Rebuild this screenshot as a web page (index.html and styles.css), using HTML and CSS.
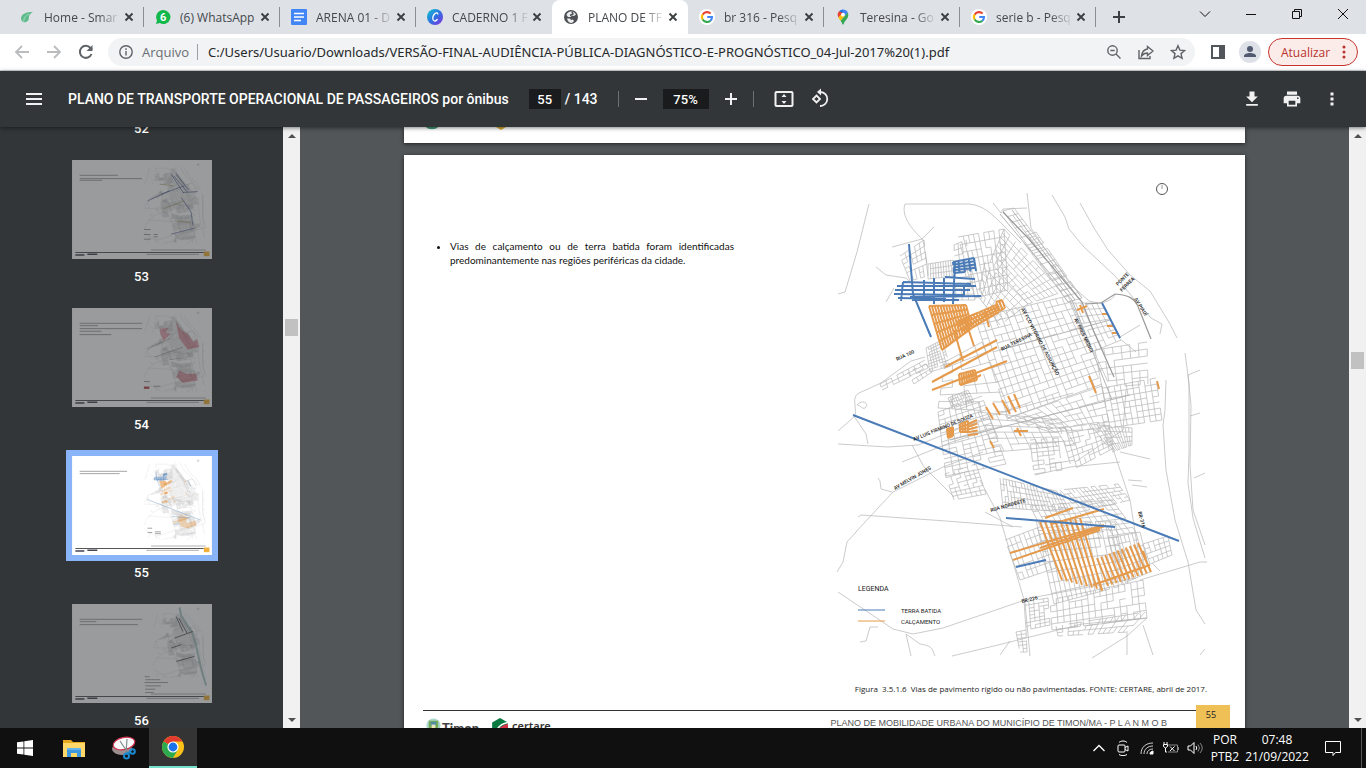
FILE: index.html
```html
<!DOCTYPE html>
<html lang="pt-BR">
<head>
    <meta charset="UTF-8">
    <meta name="viewport" content="width=device-width, initial-scale=1.0">
    <title>PLANO DE TRANSPORTE OPERACIONAL DE PASSAGEIROS por ônibus</title>
    <link rel="stylesheet" href="styles.css">
</head>
<body>

    <!-- shared shapes -->
    <svg class="defs" aria-hidden="true">
        <defs>
            <symbol id="google" viewBox="0 0 16 16">
                <circle cx="8" cy="8" r="8" fill="#fff"/>
                <g fill="none" stroke-width="2.1">
                    <path d="M11.6 4.6A5 5 0 0 0 3.7 5.6" stroke="#ea4335"/>
                    <path d="M3.7 5.4a5 5 0 0 0 0 5.2" stroke="#fbbc05"/>
                    <path d="M3.7 10.4a5 5 0 0 0 7.7 1.3" stroke="#34a853"/>
                    <path d="M11.3 11.8A5 5 0 0 0 13 8H8.2" stroke="#4285f4"/>
                </g>
            </symbol>
            <symbol id="close" viewBox="0 0 16 16">
                <path d="M4.5 4.5l7 7M11.5 4.5l-7 7" stroke="#3c4043" stroke-width="1.9"/>
            </symbol>
            <symbol id="slide-foot" viewBox="0 0 841 595">
                <path d="M20 556h772" stroke="#333" stroke-width="5"/>
                <path d="M20 571h54M92 567h60" stroke="#445" stroke-width="9"/>
                <path d="M447 567h316" stroke="#888" stroke-width="4"/>
                <path d="M475 541h328" stroke="#666" stroke-width="3"/>
                <path d="M792 550h34v28h-34z" fill="#f0b23c"/>
                <circle cx="758" cy="28" r="5" fill="none" stroke="#888" stroke-width="2"/>
            </symbol>
        </defs>
    </svg>

    <header class="tab-bar">
        <nav class="tabs">
            <div class="tab">
                <svg class="favicon" viewBox="0 0 16 16"><path d="M14 3C8 3 3 4 2 9c0 4 3 5 5 4 3-1 3-4 3-6 1-2 2-3 4-4z" fill="#5dbb8c"/><path d="M5 14c-1-4 1-7 5-9" fill="none" stroke="#a7dcc2"/></svg>
                <a class="tab-title" href="#">Home - Smar</a>
                <button class="tab-close" aria-label="Fechar"><svg><use href="#close"/></svg></button>
            </div>
            <div class="tab">
                <svg class="favicon" viewBox="0 0 16 16"><path d="M8.200 1a7 7 0 1 1-3.400 13L1 15l1-3.600A7 7 0 0 1 8.200 1z" fill="#12b84a"/><text x="8.200" y="12" text-anchor="middle" class="badge">6</text></svg>
                <a class="tab-title" href="#">(6) WhatsApp</a>
                <button class="tab-close" aria-label="Fechar"><svg><use href="#close"/></svg></button>
            </div>
            <div class="tab">
                <svg class="favicon" viewBox="0 0 16 16"><rect width="16" height="16" rx="1" fill="#4285f4"/><path d="M3 4.500h10M3 8h10M3 11.500h7" stroke="#fff" stroke-width="1.700"/></svg>
                <a class="tab-title" href="#">ARENA 01 - D</a>
                <button class="tab-close" aria-label="Fechar"><svg><use href="#close"/></svg></button>
            </div>
            <div class="tab before-active">
                <svg class="favicon" viewBox="0 0 16 16"><defs><linearGradient id="canva" x1="0" y1="0" x2="1" y2="1"><stop offset="0" stop-color="#10c8d2"/><stop offset=".5" stop-color="#2d72df"/><stop offset="1" stop-color="#8a2be2"/></linearGradient></defs><circle cx="8" cy="8" r="8" fill="url(#canva)"/><path d="M10.700 5.500c.5-2-1.600-2.300-3.200-.5C5.700 7 5.200 10 6.500 11.400c1.200 1.200 3 .4 4-1.200" fill="none" stroke="#fff" stroke-width="1.300"/></svg>
                <a class="tab-title" href="#">CADERNO 1 F</a>
                <button class="tab-close" aria-label="Fechar"><svg><use href="#close"/></svg></button>
            </div>
            <div class="tab active">
                <svg class="favicon" viewBox="0 0 16 16"><circle cx="8" cy="8" r="7" fill="#4d5156"/><path d="M8 2.500c2 0 4 1 5 3l-2 1.500-2-.5L7.500 8H5L3.500 6C4 4 6 2.500 8 2.500z" fill="#fff" opacity=".9"/><path d="M4 9.500h3l1 1.500 2-.5 1 1.500-2 2c-3 0-4.500-2-5-4.500z" fill="#fff" opacity=".9"/><path d="M9 3l1 2-3 1.500" fill="none" stroke="#4d5156" stroke-width="1.500"/></svg>
                <a class="tab-title" href="#">PLANO DE TF</a>
                <button class="tab-close" aria-label="Fechar"><svg><use href="#close"/></svg></button>
            </div>
            <div class="tab">
                <svg class="favicon"><use href="#google"/></svg>
                <a class="tab-title" href="#">br 316 - Pesq</a>
                <button class="tab-close" aria-label="Fechar"><svg><use href="#close"/></svg></button>
            </div>
            <div class="tab">
                <svg class="favicon" viewBox="0 0 16 16"><path d="M8 .5a5.300 5.300 0 0 0-4 1.800L8 6z" fill="#1a73e8"/><path d="M4 2.300A5.500 5.500 0 0 0 3.500 8.600L8 4z" fill="#ea4335"/><path d="M3.400 8.500c.6 1.200 1.500 2.200 2.200 3.300L11.500 5 8 3.600z" fill="#fbbc04"/><path d="M12.800 3.500c1.100 2.500.4 4.500-1 6.400C10 12 9 13.500 8.600 15.300c-.2.500-1 .5-1.200 0-.4-1.500-1-2.500-1.800-3.500z" fill="#34a853"/><path d="M8 .5c2.200 0 4 1.200 4.800 3L9.500 7.300 8 4z" fill="#4285f4"/><circle cx="8" cy="5.700" r="1.900" fill="#fff"/></svg>
                <a class="tab-title" href="#">Teresina - Go</a>
                <button class="tab-close" aria-label="Fechar"><svg><use href="#close"/></svg></button>
            </div>
            <div class="tab">
                <svg class="favicon"><use href="#google"/></svg>
                <a class="tab-title" href="#">serie b - Pesq</a>
                <button class="tab-close" aria-label="Fechar"><svg><use href="#close"/></svg></button>
            </div>
            <button class="new-tab" aria-label="Nova guia"><svg viewBox="0 0 16 16"><path d="M8 2v12M2 8h12" stroke="#3c4043" stroke-width="2"/></svg></button>
        </nav>
        <div class="window-buttons">
            <button aria-label="Pesquisar guias"><svg viewBox="0 0 12 12"><path d="M1 3.500l5 5 5-5"/></svg></button>
            <button aria-label="Minimizar"><svg viewBox="0 0 12 12"><path d="M1 6.500h10"/></svg></button>
            <button aria-label="Restaurar"><svg viewBox="0 0 12 12"><path d="M1.500 3.500h7v7h-7zM3.500 3.500v-2h7v7h-2"/></svg></button>
            <button aria-label="Fechar"><svg viewBox="0 0 12 12"><path d="M1 1l10 10M11 1L1 11"/></svg></button>
        </div>
    </header>

    <div class="address-bar">
        <button class="nav-button" aria-label="Voltar"><svg viewBox="0 0 16 16"><path d="M15 8H2M8 2L2 8l6 6" stroke="#babcbe"/></svg></button>
        <button class="nav-button" aria-label="Avançar"><svg viewBox="0 0 16 16"><path d="M1 8h13M8 2l6 6-6 6" stroke="#babcbe"/></svg></button>
        <button class="nav-button" aria-label="Recarregar"><svg viewBox="0 0 16 16"><path d="M13.500 10A6 6 0 1 1 12.500 4L14 5.500" stroke="#5f6368" stroke-width="2"/><path d="M14.500 1v6h-6z" fill="#5f6368" stroke="none"/></svg></button>
        <div class="omnibox">
            <svg class="info" viewBox="0 0 16 16"><circle cx="8" cy="8" r="6.200"/><path d="M8 7v4.500M8 4.300V6"/></svg>
            <label for="url">Arquivo</label>
            <input id="url" type="text" value="C:/Users/Usuario/Downloads/VERSÃO-FINAL-AUDIÊNCIA-PÚBLICA-DIAGNÓSTICO-E-PROGNÓSTICO_04-Jul-2017%20(1).pdf">
            <button aria-label="Zoom"><svg viewBox="0 0 16 16"><circle cx="6.500" cy="6.500" r="4.700"/><path d="M10 10l4.500 4.500M4.300 6.500h4.400"/></svg></button>
            <button aria-label="Compartilhar"><svg viewBox="0 0 16 16"><path d="M1 6v8.500h11V12"/><path d="M9.500 2.500L15 7l-5.500 4.500V9C7 9 5 10 3.500 12 4 8 6 5.500 9.500 5z"/></svg></button>
            <button aria-label="Favoritos"><svg viewBox="0 0 16 16"><path d="M8 1.700l1.900 4.400 4.700.4-3.600 3.100 1.100 4.700L8 11.800l-4.100 2.500L5 9.600 1.400 6.500l4.700-.4z"/></svg></button>
        </div>
        <button class="side-panel" aria-label="Painel lateral"><svg viewBox="0 0 16 16"><path d="M2 2h12v12H2z" fill="none" stroke="#53575b" stroke-width="2"/><path d="M9 2h5v12H9z" fill="#53575b"/></svg></button>
        <button class="avatar" aria-label="Perfil"><svg viewBox="0 0 22 22"><circle cx="11" cy="11" r="11" fill="#dfe1e8"/><circle cx="11" cy="8" r="3" fill="#515a70"/><path d="M5 16v-1c0-4 12-4 12 0v1z" fill="#515a70"/></svg></button>
        <button class="update">Atualizar <svg viewBox="0 0 4 16"><circle cx="2" cy="3" r="1.500"/><circle cx="2" cy="8" r="1.500"/><circle cx="2" cy="13" r="1.500"/></svg></button>
    </div>

    <div class="pdf-toolbar">
        <button class="menu" aria-label="Menu"><svg viewBox="0 0 24 24"><path d="M4 7h16M4 12h16M4 17h16" stroke-width="2"/></svg></button>
        <h1>PLANO DE TRANSPORTE OPERACIONAL DE PASSAGEIROS por ônibus</h1>
        <div class="pdf-controls">
            <input class="page-number" type="text" value="55" aria-label="Página">
            <span class="page-total">/ 143</span>
            <span class="divider"></span>
            <button aria-label="Reduzir"><svg viewBox="0 0 24 24"><path d="M6 12h12" stroke-width="2"/></svg></button>
            <input class="zoom-level" type="text" value="75%" aria-label="Zoom">
            <button aria-label="Ampliar"><svg viewBox="0 0 24 24"><path d="M6 12h12M12 6v12" stroke-width="2"/></svg></button>
            <span class="divider"></span>
            <button class="fit" aria-label="Ajustar à página"><svg viewBox="0 0 24 24"><rect x="3.500" y="5" width="17" height="14" rx="1" stroke-width="2"/><path d="M12 7l2.500 3h-5zM12 17l2.500-3h-5z" fill="#f1f1f1" stroke="none"/></svg></button>
            <button aria-label="Girar"><svg viewBox="0 0 24 24"><path d="M8.500 8.500L12 12l-3.500 3.500L5 12z" stroke-width="1.800"/><path d="M11 5h1.500a7 7 0 1 1-.5 14" stroke-width="1.800"/><path d="M13 1.500v7L9 5z" fill="#f1f1f1" stroke="none"/></svg></button>
        </div>
        <div class="pdf-actions">
            <button aria-label="Fazer download"><svg viewBox="0 0 24 24"><path d="M19 9h-4V3H9v6H5l7 7zM5 18v2h14v-2z" fill="#f1f1f1" stroke="none"/></svg></button>
            <button aria-label="Imprimir"><svg viewBox="0 0 24 24"><path d="M19 8H5c-1.700 0-3 1.300-3 3v6h4v4h12v-4h4v-6c0-1.700-1.300-3-3-3zm-3 11H8v-5h8zm3-7a1 1 0 1 1 0-2 1 1 0 0 1 0 2zM18 3H6v4h12z" fill="#f1f1f1" stroke="none"/></svg></button>
            <button aria-label="Mais ações"><svg viewBox="0 0 24 24"><path d="M10.200 4.200h3.600v3.600h-3.600zM10.200 10.200h3.600v3.600h-3.600zM10.200 16.200h3.600v3.600h-3.600z" fill="#f1f1f1" stroke="none"/></svg></button>
        </div>
    </div>

    <main class="viewer">
        <aside class="sidebar">
            <div class="thumbs">
                <span class="thumb-label">52</span>

                <svg class="thumb" viewBox="0 0 841 595">
                    <rect width="841" height="595" fill="#fff"/>
                    <path d="M46 92h230M46 112h375M46 122h135" class="thumb-text"/>
                    <g transform="translate(-404 -155)"><use href="#streets"/>
                        <path d="M1000 240l75 115M1015 250l80 95M1030 240l75 95M940 360l140-50M860 400l130-60M1070 350l90-5M1060 380l60 90 10 80M1000 600l140-35" stroke="#44538a" stroke-width="6" fill="none" opacity=".6"/>
                        <path d="M930 300l80 10M950 450l130-50M1020 520l100 10" stroke="#a78a50" stroke-width="6" opacity=".5"/></g>
                    <path d="M432 418h40M432 448h40M432 476h40M490 448h25M490 462h25" class="thumb-text"/>
                    <use href="#slide-foot"/>
                </svg>
                <span class="thumb-label">53</span>

                <svg class="thumb" viewBox="0 0 841 595">
                    <rect width="841" height="595" fill="#fff"/>
                    <path d="M46 92h375M46 106h110M46 124h375M46 140h130M46 160h190" class="thumb-text"/>
                    <g transform="translate(-404 -155)"><use href="#streets"/>
                        <path d="M1028 240l35 50 40 25 30 45 25-20 10 50-70 15-50-70zM930 280l55-5-20 25 30 10-40 45-20-40zM1050 530l40 20 60 0 10 40-90 15-40-35z" fill="#c22b40" opacity=".4"/>
                        <path d="M860 400l140-65M900 450l170-60M990 465l80-10" stroke="#555" stroke-width="4" opacity=".5"/></g>
                    <path d="M432 442h36M490 470h40" class="thumb-text"/>
                    <path d="M432 472h32v14h-32z" fill="#b8484f"/>
                    <use href="#slide-foot"/>
                </svg>
                <span class="thumb-label">54</span>

                <svg class="thumb current" viewBox="0 0 841 595">
                    <rect width="841" height="595" fill="#fff"/>
                    <path d="M46 92h285M46 106h240" class="thumb-text"/>
                    <g transform="translate(-404 -155)"><use href="#streets"/><use href="#paved"/><use href="#dirt"/></g>
                    <path d="M454 434h28M454 460h28M498 456h36M498 467h36" class="thumb-text"/>
                    <use href="#slide-foot"/>
                </svg>
                <span class="thumb-label">55</span>

                <svg class="thumb" viewBox="0 0 841 595">
                    <rect width="841" height="595" fill="#fff"/>
                    <path d="M46 92h375M46 106h100M46 124h350" class="thumb-text"/>
                    <g transform="translate(-404 -155)"><use href="#streets" transform="translate(180 40) scale(.85)"/>
                        <path d="M1050 175l10 50 65 100 25 80 30 140 30 100" stroke="#8fb3ad" stroke-width="12" fill="none" opacity=".7"/>
                        <path d="M1030 230l40 90M1045 240l50 90M1020 360l110-40M1000 420l60-20M1030 500l110-30" stroke="#333" stroke-width="6" opacity=".7"/></g>
                    <path d="M436 437h30M440 455h90M436 472h140M440 492h94M440 512h60M440 532h50" class="thumb-text"/>
                    <use href="#slide-foot"/>
                </svg>
                <span class="thumb-label">56</span>
            </div>
            <div class="scrollbar side-scroll">
                <span class="arrow up"></span>
                <span class="scroll-thumb"></span>
                <span class="arrow down"></span>
            </div>
        </aside>

        <div class="pages">
            <section class="page previous">
                <svg viewBox="0 0 100 4"><path d="M4 0c2 3 10 3 12 0z" fill="#3c9c76"/><path d="M74 0h10l-5 3z" fill="#d9a92e"/></svg>
            </section>
            <section class="page">
                <div class="page-body">
                    <ul>
                        <li>Vias de calçamento ou de terra batida foram identificadas predominantemente nas regiões periféricas da cidade.</li>
                    </ul>
                    <svg class="map" viewBox="836 180 374 480" role="img" aria-label="Mapa de vias">
                        <g id="streets">
                            <path id="blocks"/>
                            <!-- rivers and outer roads -->
                            <path d="M869 204l-12 48-12 40-7 2M905 204h65c14 2 22 10 33 21l18 18M905 204c-4 12 6 24 18 36l4 24M892 247l30-8 12-12M876 267l10 8 20 3 4 4M886 302l8-14M993 203l8 10 2-4 24-1M1027 193l4 35 10 15 30 42 18 16c14 4 22 0 26-6"/>
                            <path d="M1080 203l14 25 14 22 22 25 20 16 20 33 7 14M1052 195l13 22 4 12 14 17 32 30 20 24 16 18 11 6-2 10"/>
                            <path d="M1166 380l-1 30-2 15 3 45 9 50 13 42 8 48 9 14M1185 353l4 30v70l-1 30 5 35 12 40M1188 375l3 30-1 60 3 45 12 35M1188 375l12-5M1190 416l10-3M1194 478l11-5M1119 338l17 14M1120 337l20-12"/>
                            <path d="M855 415c2-8-4-18 4-22l22-10 30-22 14-4M857 405c5-6 12-2 9 2s-5-2-9-2M838 431l16-14M854 416l12 18 2 10M838 444l50 3 30-2 75-30 80-22M902 462l50-20 50-16M892 492l-11-3-1-8-2-3M893 492l-28 30-18 20-4 20-6 10M893 492l50-25 40-15"/>
                            <path d="M858 517l3-2 85 6 76 6M912 445l12 22 30 30M980 480l20 38 25 85 5 53M985 512l28 15M838 592l55 37 20 5 30-6 88-30 105-20M878 627h-8l-4 14-6 1M906 634l5 22M906 634l14 10c14 2 12 6 15 12M952 656l50-12 80-20 65-6M1000 655l10-14"/>
                            <path d="M1140 580l60-18 7 0M1152 563l8 8M1147 618l-20 18-35 22M1127 633v22M1143 625l10 30M1200 655l5-6M1078 460l45-30 3-40M1110 440l20 60 12 75M1035 475l35-8 50-5M1045 465l30-5M1120 452l30 7M1128 480l14 1M1132 485l15 2"/>
                            <path d="M1000 214l72 86 40 100M1012 210l68 90M1000 350l110-30M950 440l180-45" stroke-width="1"/>
                            <path d="M1085 304l16-1 14-9c12 1 20 3 24 15l12 30M1003 212l25 26 54 64 12 30 20 45" stroke="#999" stroke-width="1.200"/>
                        </g>
                        <g id="paved" fill="none" stroke="#e59a4c" stroke-width="2">
                            <path id="paved-blocks"/>
                            <path d="M945 367l52-27M932 382l65-35M932 390l75-29M961 385l20-10M954 330l9 31M966 322l8 24M985 311l4 16M1010 553l94-28M1013 560l87-30M1045 518l28-10M1052 524l52-15M1040 548l65-22M1093 585l57-20M1098 577l4 14M1014 431h14M1017 428l4 8M1077 310l10-4M1080 305l3 8M1102 314h6M1107 326h6M1112 333h6M1089 376l7 17M1157 381l2 8M986 407l7 12M993 403l7 12M1002 400l8 14M1008 396l8 16M1014 394l6 14M990 441l4 7M1143 551l3 8"/>
                        </g>
                        <g id="dirt" fill="none" stroke="#4a7bb7" stroke-width="2">
                            <path id="dirt-blocks"/>
                            <path d="M853 415l326 126M1006 518l109 9M1016 567l30-7M1102 303l18 35M909 244l4 50 18 43"/>
                            <path d="M903 282l68 2M897 286l79 0M895 290l75 0M894 294l70 1M898 298l48 1M910 297l71-1M912 300l47 0M945 277l30 2M903 282l-2 19M924 280v17M934 278v26M955 262l-2 42M944 278v24M964 285v12"/>
                        </g>
                        <g class="street-names">
                            <text transform="translate(897 361) rotate(-25)">RUA 100</text>
                            <text transform="translate(1002 351) rotate(-27)">RUA TERESINA</text>
                            <text transform="translate(1021 309) rotate(62)">AV FCO VITORINO DE ASSUNÇÃO</text>
                            <text transform="translate(1074 319) rotate(64)">AV PRES MEDICI</text>
                            <text transform="translate(1118 286) rotate(-45)">PONTE</text>
                            <text transform="translate(1122 292) rotate(-45)">FERREA</text>
                            <text transform="translate(1134 299) rotate(58)">AV PIAUÍ</text>
                            <text transform="translate(914 441) rotate(-22)">AV LUIS FIRMINO DE SOUZA</text>
                            <text transform="translate(895 490) rotate(-30)">AV MELVIN JONES</text>
                            <text transform="translate(991 512) rotate(-16)">RUA NORDESTE</text>
                            <text transform="translate(1138 512) rotate(75)">BR-316</text>
                            <text transform="translate(1022 603) rotate(-14)">BR-226</text>
                        </g>
                        <circle cx="1162" cy="189" r="5.500" fill="none" stroke="#555"/>
                        <path d="M1162 185v4" stroke="#999"/>
                        <text class="legend-title" x="858" y="591">LEGENDA</text>
                        <path d="M858 610h27" stroke="#4a7bb7"/>
                        <path d="M858 621h27" stroke="#e59a4c"/>
                        <text class="legend-item" x="901" y="613">TERRA BATIDA</text>
                        <text class="legend-item" x="901" y="624">CALÇAMENTO</text>
                    </svg>
                </div>
                <p class="caption">Figura&nbsp; 3.5.1.6&nbsp; Vias de pavimento rígido ou não pavimentadas. FONTE: CERTARE, abril de 2017.</p>
                <footer class="page-footer">
                    <div class="footer-line">
                        <svg class="crest" viewBox="0 0 16 16"><circle cx="8" cy="8" r="7.500" fill="#a9d8cf"/><path d="M3 3h10v8l-5 4-5-4z" fill="#7aab55"/><path d="M5 4h6v4H5z" fill="#4d90a3"/><path d="M6 7h4v5H6z" fill="#e9e6c0"/></svg>
                        <span class="timon">Timon</span>
                        <svg class="certare-logo" viewBox="0 0 16 16"><path d="M8 0l7 4v8l-7 4-7-4V4z" fill="#0a7a43"/><path d="M15 5v7l-7 4-3-2c0-4 5-8 10-9z" fill="#d8334a"/><path d="M5 12c1-4 5-7 10-8" fill="none" stroke="#fff" stroke-width="1.500"/></svg>
                        <span class="certare">certare</span>
                        <span class="plan-name">PLANO DE MOBILIDADE URBANA DO MUNICÍPIO DE TIMON/MA - P L A N M O B</span>
                    </div>
                    <span class="page-badge">55</span>
                </footer>
            </section>
        </div>
        <div class="scrollbar main-scroll">
            <span class="arrow up"></span>
            <span class="scroll-thumb"></span>
            <span class="arrow down"></span>
        </div>
    </main>

    <footer class="taskbar">
        <button aria-label="Iniciar"><svg viewBox="0 0 16 16"><path d="M0 2.300l6.500-.9v6.200H0zM7.300 1.300L16 0v7.600H7.300zM0 8.400h6.500v6.200L0 13.700zM7.300 8.400H16V16l-8.700-1.300z" fill="#fff"/></svg></button>
        <button aria-label="Explorador de Arquivos"><svg class="big" viewBox="0 0 24 24"><path d="M1 4h8l2 2h12v15H1z" fill="#e8a822"/><path d="M1 7h22v14H1z" fill="#ffd869"/><path d="M5 12h14v9h-4v-4H9v4H5z" fill="#3f97dd"/><path d="M5 12h14v2H5z" fill="#66b5ee"/></svg></button>
        <button aria-label="Ferramenta de Captura"><svg class="big" viewBox="0 0 24 24"><ellipse cx="10" cy="13" rx="10" ry="6" fill="#9c8d8f"/><ellipse cx="12" cy="7.500" rx="11" ry="6" transform="rotate(-12 12 7.500)" fill="#fafafa" stroke="#cf3550" stroke-width="1.200"/><path d="M8 5l8 12M15 3l-1 14" stroke="#7e8b90" stroke-width="1.200"/><g fill="none" stroke="#1b8bd0" stroke-width="2"><circle cx="14.500" cy="20" r="2.500"/><circle cx="20.500" cy="15.500" r="2.300"/><path d="M15 17l4-1"/></g></svg></button>
        <button class="running" aria-label="Google Chrome"><svg class="big" viewBox="0 0 24 24"><circle cx="12" cy="12" r="11" fill="#fbc116"/><path d="M12 12L2.500 6.500A11 11 0 0 1 21.500 6.500H12z" fill="#e33b2e"/><path d="M2.500 6.500A11 11 0 0 0 12 23l4.800-8.300L12 12z" fill="#2da94f"/><circle cx="12" cy="12" r="5.600" fill="#fff"/><circle cx="12" cy="12" r="4.400" fill="#1a73e8"/></svg></button>
        <div class="tray">
            <button aria-label="Ícones ocultos"><svg viewBox="0 0 16 16"><path d="M2.500 11L8 5.500l5.500 5.500" stroke-width="1.300"/></svg></button>
            <button aria-label="Reunir agora"><svg viewBox="0 0 16 16"><rect x="3" y="5" width="7" height="7" rx="1"/><path d="M10 7.500l3-1.500v5l-3-1.500M4 2.500c2-2 6-2 8 0M4 14.500c2 1.500 6 1.500 8 0"/></svg></button>
            <button aria-label="Rede"><svg viewBox="0 0 16 16"><path d="M2 14C2 7 7 3 14 3M5 14c0-5 4-8 9-8M8 14c0-3 2.500-5 6-5" opacity=".8"/><path d="M11 14c0-2 1-2.500 3-3v3z" fill="#fff"/></svg></button>
            <button aria-label="Bateria"><svg viewBox="0 0 16 16"><path d="M5 5h9.500v7H5M15.500 7v3" opacity=".5"/><path d="M1 2v2M4 2v2M.5 4.500h4v2l-2 1.500-2-1.500zM2.500 8v4H4M7 6.500l4.500 4.500M11.500 6.500L7 11"/></svg></button>
            <button aria-label="Volume"><svg viewBox="0 0 16 16"><path d="M1 6h2.500L7 2.500v11L3.500 10H1z"/><path d="M9 6q1.500 2 0 4"/><path d="M11 4.500q3 3.500 0 7M13 3q4.500 5 0 10" opacity=".5"/></svg></button>
        </div>
        <div class="language">POR<br>PTB2</div>
        <div class="clock">07:48<br>21/09/2022</div>
        <button class="notifications" aria-label="Notificações"><svg viewBox="0 0 16 16"><path d="M.5 1.500h15v11h-5l-2.500 3v-3H.5z"/></svg></button>
    </footer>

    <script src="map.js"></script>
</body>
</html>
```
FILE: styles.css
```css
:root {
    --frame-color: #dee1e6;
    --toolbar-color: #323639;
    --viewer-color: #525659;
    --taskbar-color: #101010;
    --ui-font: 'Open Sans', 'Segoe UI', sans-serif;
}

* {
    box-sizing: border-box;
}

body {
    margin: 0;
    height: 100vh;
    display: flex;
    flex-direction: column;
    overflow: hidden;
    font-family: var(--ui-font);
    font-size: 12px;
}

button {
    display: flex;
    align-items: center;
    justify-content: center;
    padding: 0;
    border: none;
    background: none;
    font-family: inherit;
    cursor: pointer;
}

input {
    border: none;
    padding: 0;
    background: none;
    font-family: inherit;
}

svg {
    display: block;
}

.defs {
    position: absolute;
    width: 0;
    height: 0;
}

/* --- tabs --- */
.tab-bar {
    flex: none;
    display: flex;
    justify-content: space-between;
    height: 34px;
    background: var(--frame-color);
}

.tabs {
    display: flex;
    flex: 1;
    min-width: 0;
    padding-left: 8px;
}

.tab {
    display: flex;
    align-items: center;
    flex: 0 1 136px;
    min-width: 0;
    padding: 0 7px 0 11px;
    background: linear-gradient(#8b8e92, #8b8e92) right center / 1px 20px no-repeat;
}

.tab.before-active {
    background: none;
}

.tab.active {
    background: #fff;
    border-radius: 8px 8px 0 0;
}

.favicon {
    flex: none;
    width: 16px;
    height: 16px;
    margin-right: 9px;
}

.badge {
    fill: #fff;
    font: bold 11px Roboto, sans-serif;
}

.tab-title {
    flex: 1;
    white-space: nowrap;
    color: #45484c;
    text-decoration: none;
    mask-image: linear-gradient(to right, #000 70%, rgba(0, 0, 0, 0.15) 96%);
}

.tab:nth-child(2) .tab-title {
    mask-image: none;
}

.tab-close {
    flex: none;
    width: 16px;
    height: 16px;
}

.tab-close svg {
    width: 16px;
    height: 16px;
}

.new-tab {
    width: 28px;
    margin-left: 9px;
}

.new-tab svg {
    width: 16px;
    height: 16px;
}

.window-buttons {
    display: flex;
    height: 28px;
}

.window-buttons button {
    width: 46px;
}

.window-buttons svg {
    width: 12px;
    height: 12px;
    fill: none;
    stroke: #111;
}

/* --- address bar --- */
.address-bar {
    flex: none;
    display: flex;
    align-items: center;
    height: 37px;
    padding: 0 8px 0 6px;
    background: #fff;
    border-bottom: 1px solid #d5d7da;
}

.nav-button {
    width: 32px;
    height: 28px;
}

.nav-button svg {
    width: 16px;
    height: 16px;
    fill: none;
    stroke-width: 1.8;
}

.omnibox {
    flex: 1;
    display: flex;
    align-items: center;
    height: 28px;
    margin-left: 6px;
    padding: 0 1px 0 10px;
    border-radius: 14px;
    background: #f1f3f4;
}

.omnibox svg {
    width: 16px;
    height: 16px;
    fill: none;
    stroke: #5f6368;
    stroke-width: 1.4;
}

.omnibox label {
    margin-left: 8px;
    padding-right: 8px;
    border-right: 1px solid #9aa0a6;
    line-height: 16px;
    font-size: 13px;
    color: #6a6e73;
}

.omnibox input {
    flex: 1;
    margin-left: 10px;
    font-family: 'Noto Sans', sans-serif;
    font-size: 13px;
    color: #26282b;
}

.omnibox button {
    width: 32px;
}

.side-panel {
    width: 28px;
    margin-left: 9px;
}

.side-panel svg {
    width: 16px;
    height: 16px;
}

.avatar {
    width: 22px;
    margin-left: 7px;
}

.avatar svg {
    width: 22px;
    height: 22px;
}

.update {
    justify-content: space-between;
    width: 90px;
    height: 28px;
    margin-left: 7px;
    padding: 0 11px 0 12px;
    border: 1px solid #c5352c;
    border-radius: 14px;
    background: #fbecea;
    color: #b8322b;
    font-size: 12px;
}

.update svg {
    width: 4px;
    height: 16px;
    fill: #b8322b;
}

/* --- pdf toolbar --- */
.pdf-toolbar {
    position: relative;
    z-index: 1;
    flex: none;
    display: flex;
    align-items: center;
    height: 56px;
    padding: 0 16px 0 22px;
    background: var(--toolbar-color);
    box-shadow: 0 1px 4px rgba(0, 0, 0, 0.5);
    color: #fff;
    font-family: Roboto, sans-serif;
    font-size: 14px;
    font-weight: 500;
}

.pdf-toolbar svg {
    width: 24px;
    height: 24px;
    fill: none;
    stroke: #f1f1f1;
}

.pdf-toolbar h1 {
    margin: 0 0 0 22px;
    font-size: 14px;
    font-weight: 500;
}

.pdf-controls {
    display: flex;
    align-items: center;
    margin-left: 20px;
}

.pdf-controls input {
    height: 20px;
    background: #191b1c;
    color: #fff;
    text-align: center;
    font-size: 13px;
    font-weight: 500;
}

.page-number {
    width: 32px;
}

.page-total {
    margin: 0 20px 0 4px;
}

.divider {
    width: 1px;
    height: 16px;
    background: #6d7072;
}

.pdf-controls button {
    width: 24px;
    margin: 0 10px;
}

.zoom-level {
    width: 46px;
}

.pdf-controls .fit {
    margin: 0 2px 0 18px;
}

.pdf-actions {
    display: flex;
    gap: 4px;
    margin-left: auto;
}

.pdf-actions button {
    width: 36px;
}

.pdf-actions svg {
    width: 20px;
    height: 20px;
}

/* --- viewer --- */
.viewer {
    flex: 1;
    display: flex;
    min-height: 0;
    background: var(--viewer-color);
}

.sidebar {
    flex: none;
    display: flex;
    width: 300px;
    background: var(--toolbar-color);
}

.thumbs {
    flex: 1;
    display: flex;
    flex-direction: column;
    align-items: center;
    overflow: hidden;
    color: #fff;
    font: 500 13px/18px Roboto, sans-serif;
}

.thumb {
    --street-width: 1.3;
    flex: none;
    width: 140px;
    height: 99px;
    opacity: 0.5;
}

.thumb.current {
    --street-width: 1;
    opacity: 1;
    outline: 6px solid #8ab4f8;
}

.thumb-text {
    fill: none;
    stroke: #777;
    stroke-width: 4;
}

.thumb-label {
    margin: 9px 0 22px;
}

.thumb-label:first-child {
    margin-top: -7px;
}

.scrollbar {
    flex: none;
    display: grid;
    width: 17px;
    background: #f1f1f1;
}

.side-scroll {
    grid-template-rows: 17px 175fr 17px 375fr 17px;
}

.main-scroll {
    grid-template-rows: 17px 208fr 17px 342fr 17px;
}

.scroll-thumb {
    grid-row: 3;
    margin: 0 2px;
    background: #c1c1c1;
}

.arrow {
    place-self: center;
    border: 4px solid transparent;
}

.arrow.up {
    grid-row: 1;
    border-top: none;
    border-bottom-color: #505050;
}

.arrow.down {
    grid-row: 5;
    border-bottom: none;
    border-top-color: #505050;
}

.pages {
    flex: 1;
    min-width: 0;
    padding: 0 104px;
    overflow: hidden;
}

.page {
    display: flex;
    flex-direction: column;
    min-height: 595px;
    background: #fff;
    box-shadow: 0 1px 4px rgba(0, 0, 0, 0.6);
    color: #222;
}

.page.previous {
    min-height: 16px;
    margin-bottom: 12px;
}

.previous svg {
    width: 100px;
    height: 4px;
    margin-left: 18px;
}

.page-body {
    display: flex;
    justify-content: space-between;
    padding: 25px 35px 0 33px;
}

.page-body ul {
    flex: 0 1 297px;
    margin: 59px 0 0;
    padding-left: 13px;
    font: 10px/14px Lato, Carlito, sans-serif;
    text-align: justify;
    color: #111;
}

.map {
    flex: none;
    width: 374px;
    height: 480px;
}

#streets {
    fill: none;
    stroke: #b4b4b4;
    stroke-width: var(--street-width, 0.7);
}

.street-names {
    font: 500 5px Roboto, sans-serif;
    fill: #222;
}

.legend-title {
    font: 7px Roboto, sans-serif;
    fill: #222;
}

.legend-item {
    font: 6px Roboto, sans-serif;
    fill: #222;
}

.caption {
    margin: 22px 38px 0 0;
    text-align: right;
    font: 8px/14px 'Open Sans', sans-serif;
}

.page-footer {
    display: flex;
    margin: 9px 15px 0 19px;
}

.footer-line {
    flex: 1;
    display: flex;
    align-items: flex-start;
    margin-top: 5px;
    padding-top: 7px;
    border-top: 1px solid #333;
}

.crest {
    width: 15px;
    height: 15px;
    margin-left: 3px;
}

.timon {
    margin-left: 1px;
    font: 900 13px/20px Lato, sans-serif;
    color: #444;
}

.certare-logo {
    width: 18px;
    height: 18px;
    margin-left: 12px;
}

.certare {
    margin-left: 3px;
    font: 600 11px/15px 'Noto Sans', sans-serif;
    color: #333;
}

.plan-name {
    margin: 0 29px 0 auto;
    font: 9px/10px 'Liberation Sans', Arial, sans-serif;
    color: #555;
}

.page-badge {
    width: 34px;
    height: 28px;
    padding-right: 4px;
    background: #efc056;
    text-align: center;
    font: 9px/20px 'Open Sans', sans-serif;
}

/* --- taskbar --- */
.taskbar {
    flex: none;
    display: flex;
    align-items: stretch;
    height: 40px;
    padding-right: 4px;
    background: var(--taskbar-color);
    color: #fff;
    font-size: 12px;
    line-height: 17px;
}

.taskbar > button {
    width: 50px;
}

.taskbar > button:first-child {
    width: 49px;
}

.taskbar svg {
    width: 16px;
    height: 16px;
}

.taskbar svg.big {
    width: 24px;
    height: 24px;
}

.taskbar > .running {
    width: 48px;
    background: #343434;
    border-bottom: 2px solid #76e0cd;
}

.tray {
    display: flex;
    margin-left: auto;
}

.tray button {
    width: 24px;
}

.tray svg,
.notifications svg {
    fill: none;
    stroke: #fff;
}

.language,
.clock {
    padding-top: 3px;
    text-align: center;
}

.language {
    width: 36px;
}

.clock {
    width: 68px;
}

.taskbar > .notifications {
    width: 51px;
    padding-right: 6px;
    border-right: 1px solid #555;
}
```
FILE: map.js
```js
// Street blocks, each one a quad: corners [top-left, top-right, bottom-right, bottom-left],
// number of columns and rows, share of segments left out
const blocks = [
    [[958,237],[1004,229],[1008,290],[975,298], 9, 8, .08],
    [[1004,229],[1062,292],[1028,304],[990,262], 10, 8, .1],
    [[985,262],[1028,304],[1000,325],[978,296], 8, 6, .1],
    [[1003,211],[1014,208],[1082,298],[1068,302], 2, 16, .2],
    [[1020,238],[1036,232],[1082,298],[1068,302], 2, 12, .2],
    [[975,318],[1068,296],[1108,382],[1008,418], 15, 14, .08],
    [[1070,303],[1102,303],[1121,340],[1092,352], 6, 7, .1],
    [[1095,350],[1147,342],[1148,384],[1102,388], 6, 6, .3],
    [[1102,388],[1156,378],[1162,420],[1110,428], 9, 7, .1],
    [[1008,418],[1102,386],[1110,428],[1050,432], 13, 6, .18],
    [[978,412],[1060,420],[1075,445],[995,452], 9, 6, .15],
    [[1060,428],[1108,422],[1114,448],[1072,470], 9, 7, .25],
    [[1090,424],[1132,428],[1132,445],[1112,452], 12, 4, .15],
    [[938,412],[982,396],[1006,464],[946,476], 8, 15, .15],
    [[948,398],[968,390],[974,402],[952,408], 9, 4, .05],
    [[945,362],[982,342],[1010,412],[938,408], 5, 7, .35],
    [[1030,440],[1058,438],[1062,470],[1034,474], 5, 8, .35],
    [[926,348],[942,340],[950,366],[930,372], 7, 9, .1],
    [[880,384],[925,360],[928,368],[882,390], 8, 2, .2],
    [[908,372],[926,364],[932,372],[914,384], 4, 3, .3],
    [[945,474],[976,464],[986,494],[954,500], 7, 7, .3],
    [[1000,478],[1060,492],[1070,512],[1003,508], 20, 5, .12],
    [[1060,490],[1118,484],[1130,500],[1080,512], 15, 5, .15],
    [[1030,506],[1112,500],[1136,532],[1050,545], 15, 7, .15],
    [[1005,540],[1042,526],[1056,568],[1020,580], 8, 6, .1],
    [[1036,520],[1115,522],[1128,584],[1054,604], 16, 8, .08],
    [[1108,538],[1140,532],[1150,572],[1122,584], 8, 6, .1],
    [[1143,544],[1168,536],[1172,555],[1150,564], 5, 4, .05],
    [[1024,602],[1048,598],[1050,625],[1026,630], 5, 8, .25],
    [[1050,600],[1143,580],[1147,618],[1052,630], 15, 5, .15],
    [[1056,626],[1145,612],[1128,632],[1058,636], 14, 3, .25],
    [[1016,632],[1026,630],[1027,652],[1020,652], 2, 6, .1],
    [[900,256],[924,240],[928,276],[910,281], 5, 6, .25],
    [[928,264],[953,260],[955,276],[928,279], 10, 3, .05],
    [[954,245],[966,240],[975,300],[956,300], 3, 10, .2]
];

const pavedBlocks = [
    [[929,306],[966,305],[972,328],[942,350], 13, 5, 0],
    [[956,322],[996,305],[999,312],[965,332], 14, 3, 0],
    [[996,302],[1002,300],[1005,308],[1000,311], 2, 1, 0],
    [[959,374],[975,370],[977,380],[960,385], 7, 2, 0],
    [[947,429],[953,427],[953,436],[948,438], 3, 2, 0],
    [[960,424],[968,421],[968,432],[960,432], 3, 3, 0],
    [[968,424],[977,420],[978,434],[968,435], 0, 4, 0],
    [[1040,522],[1080,518],[1102,590],[1062,580], 8, 0, 0],
    [[1097,558],[1138,543],[1151,572],[1108,586], 10, 0, 0]
];

const dirtBlocks = [
    [[953,262],[974,258],[976,271],[954,273], 4, 4, .1]
];

// Small fixed-seed generator so the map is the same on every load
let seed = 7;
function random() {
    seed = (seed * 16807) % 2147483647;
    return seed / 2147483647;
}

function pointIn(quad, u, v) {
    const [a, b, c, d] = quad;
    return [0, 1].map(i =>
        (a[i] * (1 - u) * (1 - v) + b[i] * u * (1 - v) + c[i] * u * v + d[i] * (1 - u) * v).toFixed(1)
    ).join(' ');
}

function drawBlocks(id, list) {
    let path = '';
    list.forEach(block => {
        const quad = block.slice(0, 4);
        const [cols, rows, gaps] = block.slice(4);
        const stepsDown = rows || 1;
        const stepsAcross = cols || 1;

        // streets running down the block
        for (let i = 0; cols && i <= cols; i++) {
            for (let j = 0; j < stepsDown; j++) {
                if (random() < gaps) continue;
                path += `M${pointIn(quad, i / cols, j / stepsDown)}L${pointIn(quad, i / cols, (j + 1) / stepsDown)}`;
            }
        }
        // streets running across
        for (let j = 0; rows && j <= rows; j++) {
            for (let i = 0; i < stepsAcross; i++) {
                if (random() < gaps) continue;
                path += `M${pointIn(quad, i / stepsAcross, j / rows)}L${pointIn(quad, (i + 1) / stepsAcross, j / rows)}`;
            }
        }
    });
    document.getElementById(id).setAttribute('d', path);
}

drawBlocks('blocks', blocks);
drawBlocks('paved-blocks', pavedBlocks);
drawBlocks('dirt-blocks', dirtBlocks);
```
